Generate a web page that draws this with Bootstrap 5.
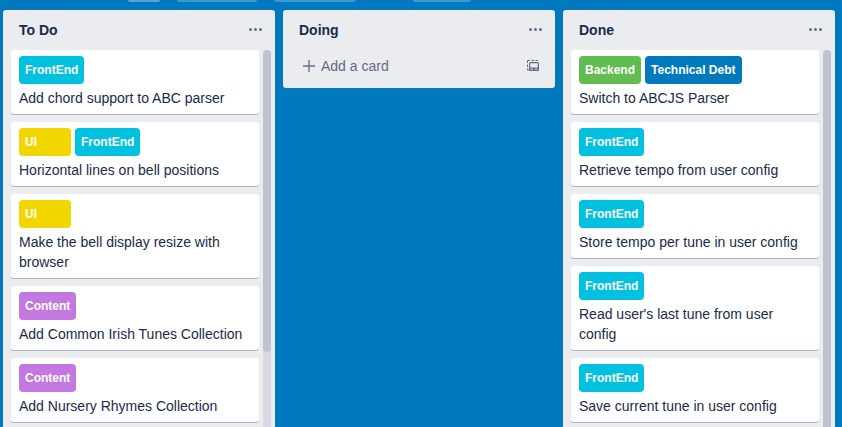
<!DOCTYPE html>
<html lang="en">
<head>
<meta charset="utf-8">
<meta name="viewport" content="width=device-width, initial-scale=1">
<title>Board</title>
<link href="https://cdn.jsdelivr.net/npm/bootstrap@5.3.0/dist/css/bootstrap.min.css" rel="stylesheet">
<style>
  body { background: #0079bf; color: #172b4d; font: 14px/20px "Liberation Sans", Arial, sans-serif; text-rendering: optimizeSpeed; }
  .board-bar { height: 10px; padding-left: 128px; }
  .bar-item { width: 82px; height: 2px; border-radius: 0 0 3px 3px; background: rgba(255,255,255,.24); }
  .bar-star { width: 32px; background: rgba(255,255,255,.32); }
  .bar-team { width: 80px; }
  .bar-invite { width: 58px; margin-left: 40px; }
  .bar-gap { gap: 17px; }
  .board-lists { padding: 0 7px 0 3px; min-height: 0; }
  .board-list { flex: 1 1 0; min-width: 0; max-height: 100%; background: #ebecf0; border-radius: 3px; }
  .open-end { border-radius: 3px 3px 0 0; }
  .list-head { height: 40px; padding: 0 12px 0 16px; }
  .list-title { font-size: 14px; line-height: 20px; font-weight: 700; }
  .plain-btn { color: #5e6c84; background: none; border: 0; padding: 0; line-height: 20px; }
  .plain-btn svg { display: block; }
  .list-body { padding: 0 4px 0 8px; gap: 4px; min-height: 0; }
  .task { background: #fff; border-radius: 3px; padding: 6px 8px; box-shadow: 0 1px 0 #b1b8c7; flex: none; }
  .tag { min-width: 52px; height: 28px; padding: 0 6px; border-radius: 4px; color: #fff; font-size: 12px; font-weight: 700; line-height: 28px; }
  .tag-front { background: #00c2e0; }
  .tag-ui { background: #f2d600; }
  .tag-content { background: #c377e0; }
  .tag-back { background: #61bd4f; }
  .tag-debt { background: #0079bf; }
  .track { width: 8px; flex: none; background: #d8dbe3; border-radius: 4px 4px 0 0; }
  .thumb { height: 80%; background: #bfc3d0; border-radius: 4px; }
  .thumb-long { height: 100%; border-radius: 4px 4px 0 0; }
  .list-foot { padding: 2px 14px 8px 18px; }
  .add-btn { height: 28px; gap: 4px; }
</style>
</head>
<body class="vh-100 overflow-hidden d-flex flex-column">
<header class="board-bar bar-gap d-flex flex-shrink-0">
  <div class="bar-item bar-star"></div>
  <div class="bar-item bar-team"></div>
  <div class="bar-item"></div>
  <div class="bar-item bar-invite"></div>
</header>
<main class="board-lists d-flex gap-2 align-items-start flex-grow-1">

  <section class="board-list open-end d-flex flex-column h-100">
    <div class="list-head d-flex align-items-center justify-content-between flex-shrink-0">
      <h2 class="list-title m-0">To Do</h2>
      <button class="plain-btn" type="button" aria-label="To Do list actions"><svg width="16" height="16" viewBox="0 0 16 16" fill="currentColor"><circle cx="3.5" cy="7.5" r="1.5"/><circle cx="8.5" cy="7.5" r="1.5"/><circle cx="13.5" cy="7.5" r="1.5"/></svg></button>
    </div>
    <div class="list-body d-flex flex-grow-1">
      <div class="d-flex flex-column gap-2 flex-grow-1 overflow-hidden">
        <article class="task"><div class="d-flex gap-1 mb-1"><span class="tag tag-front">FrontEnd</span></div><div>Add chord support to ABC parser</div></article>
        <article class="task"><div class="d-flex gap-1 mb-1"><span class="tag tag-ui">UI</span><span class="tag tag-front">FrontEnd</span></div><div>Horizontal lines on bell positions</div></article>
        <article class="task"><div class="d-flex gap-1 mb-1"><span class="tag tag-ui">UI</span></div><div>Make the bell display resize with browser</div></article>
        <article class="task"><div class="d-flex gap-1 mb-1"><span class="tag tag-content">Content</span></div><div>Add Common Irish Tunes Collection</div></article>
        <article class="task"><div class="d-flex gap-1 mb-1"><span class="tag tag-content">Content</span></div><div>Add Nursery Rhymes Collection</div></article>
      </div>
      <div class="track"><div class="thumb"></div></div>
    </div>
  </section>

  <section class="board-list">
    <div class="list-head d-flex align-items-center justify-content-between">
      <h2 class="list-title m-0">Doing</h2>
      <button class="plain-btn" type="button" aria-label="Doing list actions"><svg width="16" height="16" viewBox="0 0 16 16" fill="currentColor"><circle cx="3.5" cy="7.5" r="1.5"/><circle cx="8.5" cy="7.5" r="1.5"/><circle cx="13.5" cy="7.5" r="1.5"/></svg></button>
    </div>
    <div class="list-foot d-flex align-items-center justify-content-between">
      <button class="plain-btn add-btn d-flex align-items-center" type="button"><svg width="16" height="16" viewBox="0 0 16 16" fill="none" stroke="currentColor" stroke-width="1.3"><path d="M8 2v12M2 8h12"/></svg>Add a card</button>
      <button class="plain-btn" type="button" aria-label="Create from template"><svg width="16" height="16" viewBox="0 0 16 16" fill="none" stroke="currentColor"><path d="M2.5 5V2.5H5M6.5 2.5h2.5M10.5 2.5h2.5M2.5 6.5v2.5M2.5 10.5v1.5h1.5" stroke-width="1"/><rect x="4.6" y="4.6" width="8.8" height="7.8" rx="1" stroke-width="1.2"/><path d="M4.6 9.5h8.8v3.4H4.6z" fill="currentColor" stroke="none"/><path d="M5.6 11.2h2.4M10 11.2h2.4" stroke="#ebecf0"/></svg></button>
    </div>
  </section>

  <section class="board-list open-end d-flex flex-column h-100">
    <div class="list-head d-flex align-items-center justify-content-between flex-shrink-0">
      <h2 class="list-title m-0">Done</h2>
      <button class="plain-btn" type="button" aria-label="Done list actions"><svg width="16" height="16" viewBox="0 0 16 16" fill="currentColor"><circle cx="3.5" cy="7.5" r="1.5"/><circle cx="8.5" cy="7.5" r="1.5"/><circle cx="13.5" cy="7.5" r="1.5"/></svg></button>
    </div>
    <div class="list-body d-flex flex-grow-1">
      <div class="d-flex flex-column gap-2 flex-grow-1 overflow-hidden">
        <article class="task"><div class="d-flex gap-1 mb-1"><span class="tag tag-back">Backend</span><span class="tag tag-debt">Technical Debt</span></div><div>Switch to ABCJS Parser</div></article>
        <article class="task"><div class="d-flex gap-1 mb-1"><span class="tag tag-front">FrontEnd</span></div><div>Retrieve tempo from user config</div></article>
        <article class="task"><div class="d-flex gap-1 mb-1"><span class="tag tag-front">FrontEnd</span></div><div>Store tempo per tune in user config</div></article>
        <article class="task"><div class="d-flex gap-1 mb-1"><span class="tag tag-front">FrontEnd</span></div><div>Read user's last tune from user config</div></article>
        <article class="task"><div class="d-flex gap-1 mb-1"><span class="tag tag-front">FrontEnd</span></div><div>Save current tune in user config</div></article>
      </div>
      <div class="track"><div class="thumb thumb-long"></div></div>
    </div>
  </section>
</main>
<script src="https://cdn.jsdelivr.net/npm/bootstrap@5.3.0/dist/js/bootstrap.bundle.min.js"></script>
</body>
</html>
